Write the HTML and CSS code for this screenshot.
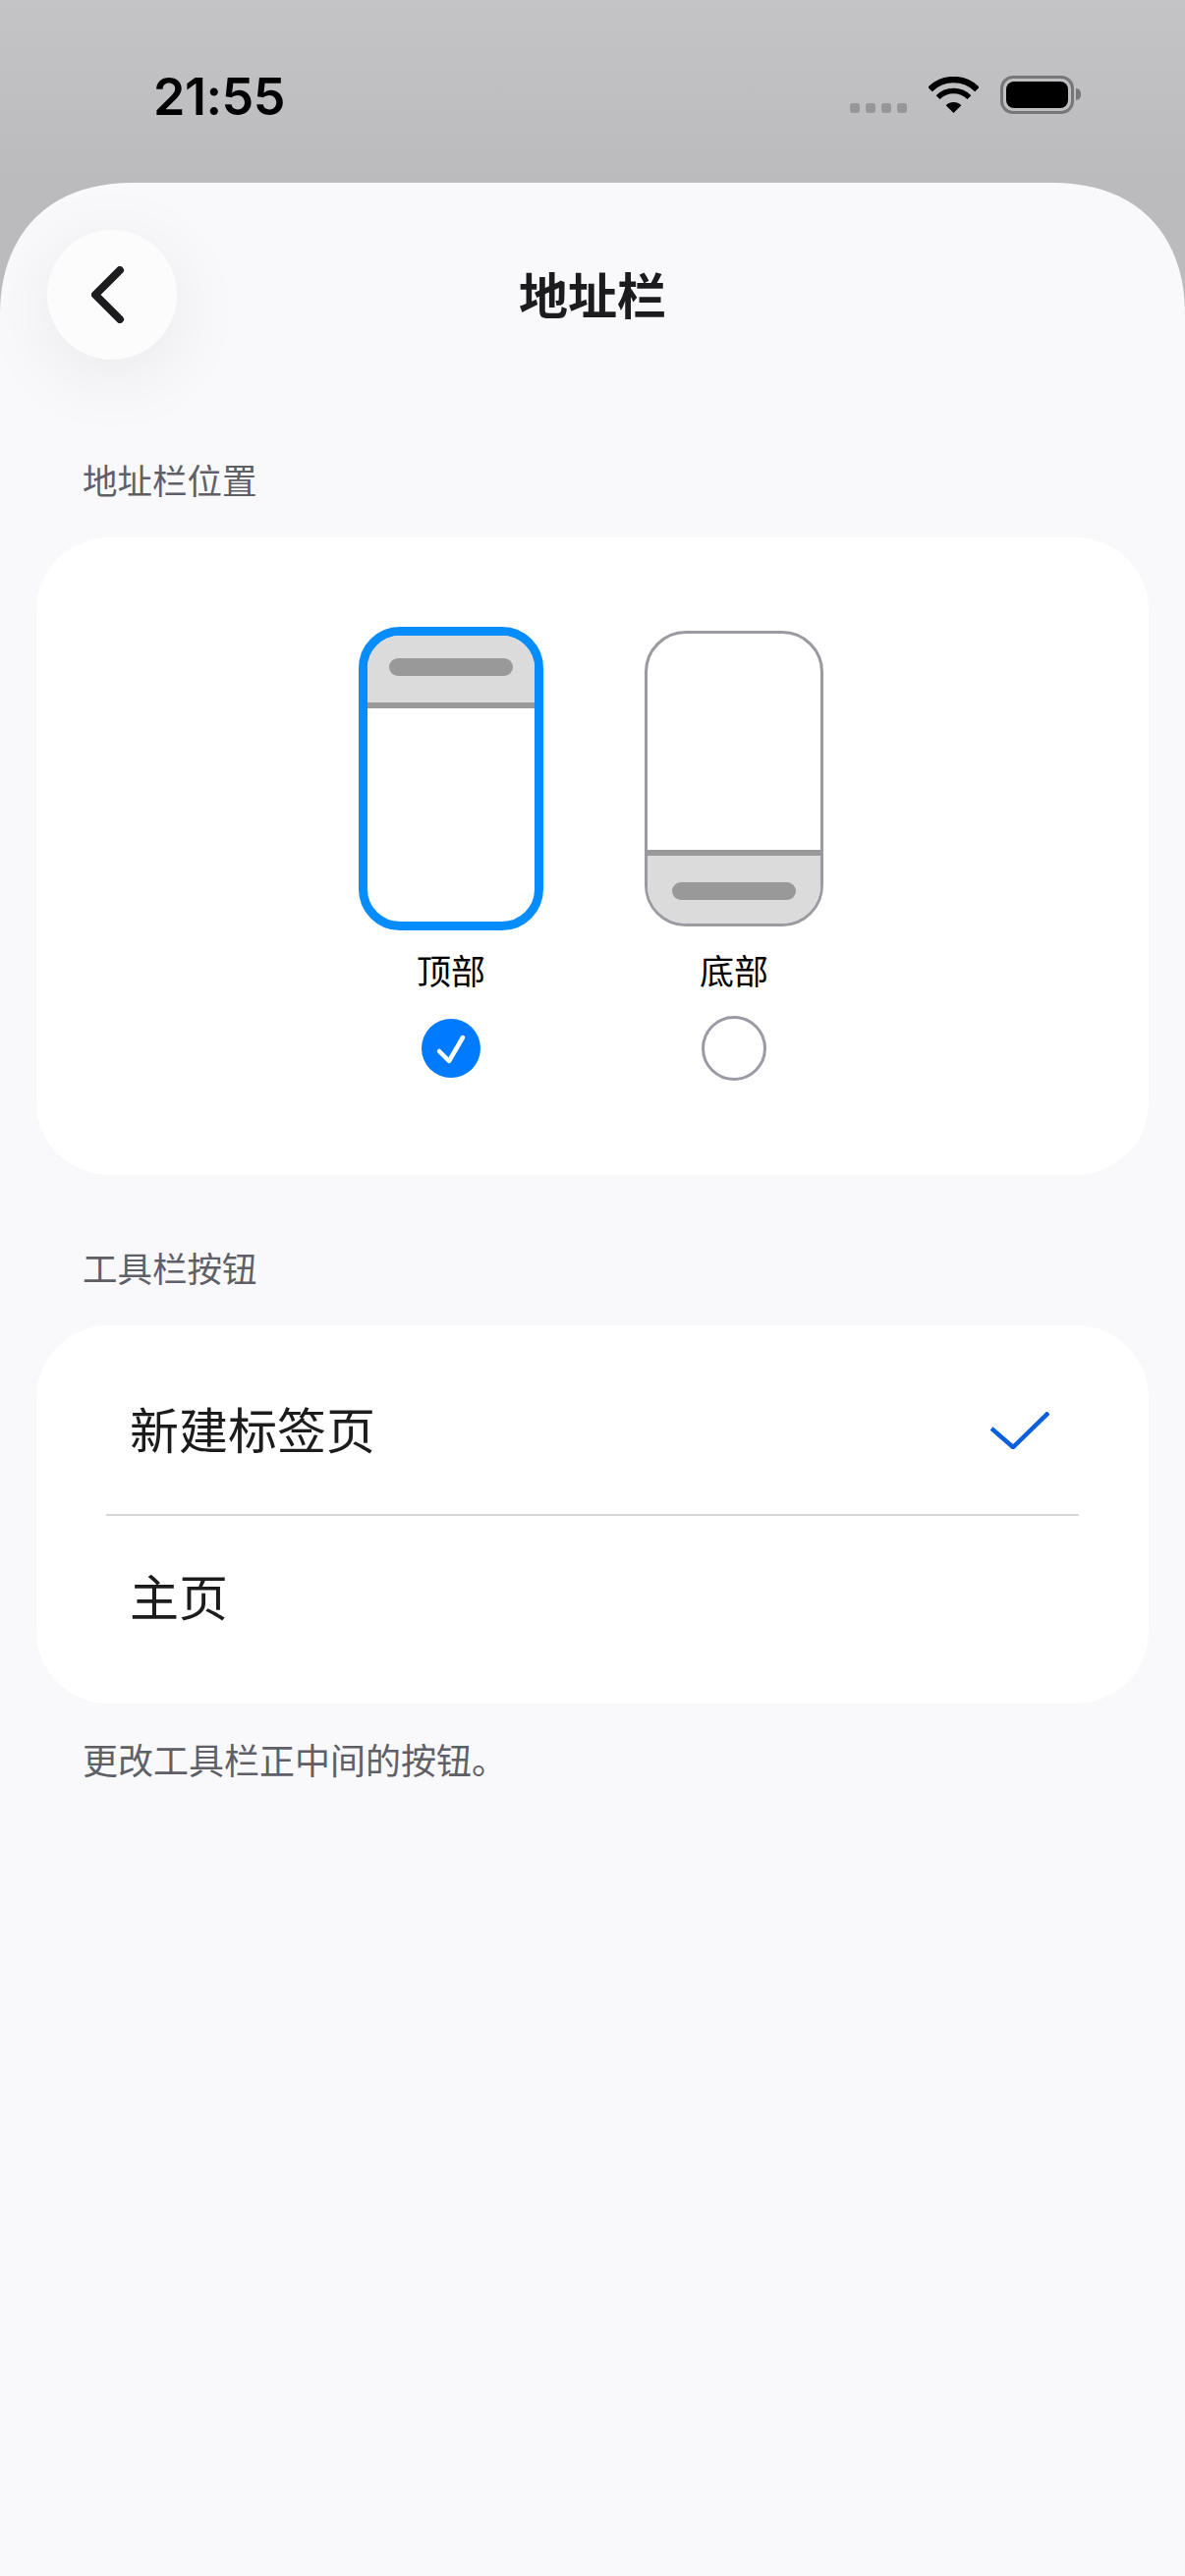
FILE: index.html
```html
<!DOCTYPE html>
<html lang="zh-CN">
<head>
    <meta charset="UTF-8">
    <meta name="viewport" content="width=device-width, initial-scale=1.0">
    <title>地址栏</title>
    <link rel="stylesheet" href="styles.css">
</head>
<body>
    <div class="status-bar">
        <span class="time">21:55</span>
        <div class="status-icons">
            <div class="signal"><i></i><i></i><i></i><i></i></div>
            <svg class="wifi" width="51" height="37" viewBox="0 0 51 37">
                <path d="M1.5 13A34 34 0 0 1 49.5 13" fill="none" stroke="#000" stroke-width="6.5"/>
                <path d="M9.6 21.1A22.5 22.5 0 0 1 41.4 21.1" fill="none" stroke="#000" stroke-width="5.5"/>
                <path d="M25.5 37L17.7 29.2A11 11 0 0 1 33.3 29.2Z" fill="#000"/>
            </svg>
            <div class="battery"><div class="battery-level"></div></div>
            <div class="battery-nub"></div>
        </div>
    </div>

    <div class="sheet">
        <div class="header">
            <button class="back">
                <svg width="34" height="58" viewBox="0 0 34 58">
                    <path d="M29 4L4 29L29 54" fill="none" stroke="#1c1c1e" stroke-width="8" stroke-linecap="round" stroke-linejoin="round"/>
                </svg>
            </button>
            <h1>地址栏</h1>
        </div>

        <div class="section-label">地址栏位置</div>
        <div class="card position-card">
            <div class="position">
                <div class="phone-slot">
                    <div class="phone phone-active">
                        <div class="phone-bar phone-bar-top"><div class="pill"></div></div>
                    </div>
                </div>
                <div class="position-name">顶部</div>
                <div class="check-slot">
                    <svg width="60" height="60" viewBox="0 0 60 60">
                        <circle cx="30" cy="30" r="30" fill="#007aff"/>
                        <path d="M18 33L28 43L42 19" fill="none" stroke="#fff" stroke-width="4.5" stroke-linecap="round" stroke-linejoin="round"/>
                    </svg>
                </div>
            </div>
            <div class="position">
                <div class="phone-slot">
                    <div class="phone">
                        <div class="phone-bar phone-bar-bottom"><div class="pill"></div></div>
                    </div>
                </div>
                <div class="position-name">底部</div>
                <div class="check-slot"><div class="radio"></div></div>
            </div>
        </div>

        <div class="section-label">工具栏按钮</div>
        <div class="card list-card">
            <div class="row row-first">
                <span class="row-text">新建标签页</span>
                <svg width="60" height="38" viewBox="0 0 60 38">
                    <path d="M1 17L23 36L59 1" fill="none" stroke="#0a5fdc" stroke-width="4.5"/>
                </svg>
            </div>
            <div class="row row-last"><span class="row-text">主页</span></div>
        </div>
        <div class="footnote">更改工具栏正中间的按钮。</div>
    </div>
</body>
</html>
```
FILE: styles.css
```css
* {
    box-sizing: border-box;
}
html, body {
    margin: 0;
    height: 100%;
}
body {
    width: 1206px;
    height: 2622px;
    overflow: hidden;
    display: flex;
    flex-direction: column;
    font-family: "Noto Sans CJK SC", "Noto Sans", sans-serif;
    background: linear-gradient(#c4c4c6, #bbbbbd 186px, #bbbbbd 300px);
}

/* status bar */
.status-bar {
    height: 186px;
    flex-shrink: 0;
    display: flex;
    align-items: flex-start;
    justify-content: space-between;
    padding: 69px 106px 0 156px;
}
.time {
    font-family: Inter, "Liberation Sans", sans-serif;
    font-size: 52px;
    font-weight: 600;
    line-height: 60px;
    letter-spacing: -0.5px;
    color: #000;
}
.status-icons {
    display: flex;
    align-items: flex-start;
    padding-top: 9px;
}
.signal {
    display: flex;
    gap: 6px;
    margin-top: 27px;
    margin-right: 22px;
}
.signal i {
    width: 10px;
    height: 10px;
    border-radius: 3px;
    background-color: #979799;
}
.wifi {
    margin-right: 22px;
}
.battery {
    width: 75px;
    height: 39px;
    padding: 3px;
    border: 3px solid #777779;
    border-radius: 13px;
    margin-top: -1px;
}
.battery-level {
    height: 100%;
    background-color: #000;
    border-radius: 8px;
}
.battery-nub {
    width: 5px;
    height: 12px;
    margin: 12px 0 0 2px;
    background-color: #777779;
    border-radius: 0 5px 5px 0;
}

/* sheet, corners are a bit squarer than a plain radius */
.sheet {
    flex: 1;
    background-color: #f9f9fb;
    clip-path: path("M0 134C0 51 51 0 134 0L1072 0C1155 0 1206 51 1206 134L1206 2436L0 2436Z");
    padding: 48px 37px 0;
}
.header {
    display: grid;
    grid-template-columns: 132px 1fr 132px;
    align-items: center;
    margin: 0 11px 102px;
}
.back {
    width: 132px;
    height: 132px;
    border: none;
    padding: 0 9px 0 0;
    border-radius: 50%;
    background-color: #fcfcfd;
    box-shadow: 0 16px 80px rgba(0, 0, 0, 0.07);
    display: flex;
    align-items: center;
    justify-content: center;
}
h1 {
    margin: 0;
    padding-bottom: 4px;
    text-align: center;
    font-size: 50px;
    font-weight: 700;
    line-height: 60px;
    color: #1c1c1e;
}
.section-label {
    font-size: 35.5px;
    line-height: 40px;
    color: #5f5f67;
    padding-left: 47px;
    margin-bottom: 39px;
}
.card {
    background-color: #fff;
    border-radius: 74px;
}

/* address bar position */
.position-card {
    height: 649px;
    padding-top: 91px;
    margin-bottom: 74px;
    display: flex;
    justify-content: center;
    gap: 88px;
}
.position {
    width: 200px;
    display: flex;
    flex-direction: column;
    align-items: center;
}
.phone-slot {
    height: 309px;
    display: flex;
    align-items: center;
}
.phone {
    width: 182px;
    height: 301px;
    border: 3px solid #9a9aa0;
    border-radius: 42px;
    overflow: hidden;
    display: flex;
    flex-direction: column;
    justify-content: flex-end;
}
.phone-active {
    width: 188px;
    height: 309px;
    border: 9px solid #058cff;
    justify-content: flex-start;
}
.phone-bar {
    background-color: #dbdbdb;
    display: flex;
    justify-content: center;
}
.phone-bar-top {
    height: 74px;
    padding-top: 23px;
    border-bottom: 6px solid #999;
}
.phone-bar-bottom {
    height: 75px;
    padding-top: 27px;
    border-top: 6px solid #999;
}
.pill {
    width: 126px;
    height: 18px;
    border-radius: 9px;
    background-color: #999;
}
.position-name {
    margin-top: 20px;
    font-size: 35px;
    line-height: 40px;
    color: #000;
}
.check-slot {
    margin-top: 26px;
    height: 68px;
    display: flex;
    align-items: center;
}
.radio {
    width: 66px;
    height: 66px;
    border: 3px solid #9a9aa5;
    border-radius: 50%;
}

/* toolbar button list */
.list-card {
    height: 385px;
    padding: 0 71px;
}
.row {
    padding: 0 30px 0 24px;
    display: flex;
    align-items: center;
    justify-content: space-between;
    font-size: 50px;
    line-height: 60px;
    color: #1c1c1e;
}
.row-text {
    padding-bottom: 6px;
}
.row-first {
    height: 194px;
    padding-top: 21px;
    border-bottom: 2px solid #d6d6d8;
}
.row-last {
    height: 191px;
    padding-bottom: 26px;
}
.footnote {
    margin-top: 36px;
    padding-left: 47px;
    font-size: 36px;
    line-height: 40px;
    color: #5f5f67;
}
```
